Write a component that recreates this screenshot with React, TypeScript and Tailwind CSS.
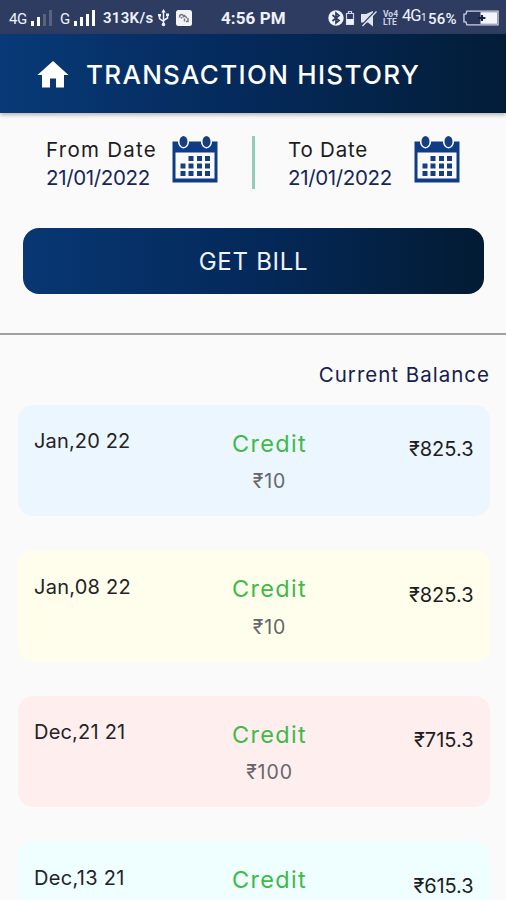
import React from "react";

const transactions = [
  { date: "Jan,20 22", amount: "₹10", balance: "₹825.3", tone: "bg-[#ecf6ff]", dateClass: "tracking-[0.15px]", balanceClass: "tracking-[0px]" },
  { date: "Jan,08 22", amount: "₹10", balance: "₹825.3", tone: "bg-[#fffeec]", dateClass: "tracking-[0.25px]", balanceClass: "tracking-[0px]" },
  { date: "Dec,21 21", amount: "₹100", balance: "₹715.3", tone: "bg-[#ffeeee]", dateClass: "tracking-[0.2px]", balanceClass: "tracking-[0px]" },
  { date: "Dec,13 21", amount: "", balance: "₹615.3", tone: "bg-[#efffff]", dateClass: "tracking-[0.3px]", balanceClass: "tracking-[-0.1px]" },
];

function Signal({ lit }: { lit: number }) {
  return (
    <div className="flex h-4 items-end gap-[3px]">
      <i className={`h-[5px] w-[3px] ${lit > 0 ? "bg-white" : "bg-white/20"}`} />
      <i className={`h-[9px] w-[3px] ${lit > 1 ? "bg-white" : "bg-white/20"}`} />
      <i className={`h-[12px] w-[3px] ${lit > 2 ? "bg-white" : "bg-white/20"}`} />
      <i className={`h-[16px] w-[3px] ${lit > 3 ? "bg-white" : "bg-white/20"}`} />
    </div>
  );
}

function StatusBar() {
  return (
    <div className="flex h-[34px] shrink-0 items-center bg-[#2e3c62] pt-[2px] font-[Roboto,sans-serif] leading-none whitespace-nowrap text-[#eef2fa]">
      <span className="ml-[9px] w-[22px] pt-[3px] text-[15px] tracking-[-0.4px]">4G</span>
      <Signal lit={2} />
      <span className="ml-[8px] w-[14px] pt-[3px] text-[15px]">G</span>
      <Signal lit={4} />
      <span className="ml-[8px] w-[55px] pt-px text-[15px] font-semibold tracking-[0.3px]">313K/s</span>
      <svg className="h-[18px] w-[11px] shrink-0" viewBox="0 0 11 18" fill="none" stroke="currentColor" strokeWidth="1.5">
        <path d="M5.5 2v13M1.5 6v3.5l4 3M9.5 5.500v3.500l-4 2.500" />
        <path d="M5.500 0l2.200 3.500H3.300z" fill="currentColor" stroke="none" />
        <circle cx="5.500" cy="15.500" r="1.800" fill="currentColor" stroke="none" />
        <path d="M0 5h3v2.500H0zM8 4.500h3V7H8z" fill="currentColor" stroke="none" />
      </svg>
      <svg className="ml-[7px] h-[16px] w-[16px] shrink-0" viewBox="0 0 16 16">
        <rect width="16" height="16" rx="2.500" fill="#f2f4f8" />
        <path d="M3.500 7.500q0-3 2-3t2 3M5.500 7v1.500M8 5l3 3M8.500 11.500v-3M12 8v3.500h-2" fill="none" stroke="#737986" strokeWidth="1.500" />
      </svg>
      <span className="ml-[29px] w-[67px] pt-px text-[17px] font-bold tracking-[0.1px]">4:56 PM</span>
      <svg className="ml-[40px] h-[16px] w-[27px] shrink-0" viewBox="0 0 27 16">
        <circle cx="8" cy="8" r="7.700" fill="#eef2fa" />
        <path d="M4.500 5l6.500 5.500L8 13V3l3 2.500L4.500 11" fill="none" stroke="#2e3c62" strokeWidth="1.700" />
        <path d="M18.500 3.500h7v11h-7zM20.500 1.500h3v2h-3z" fill="none" stroke="#cdd4e3" strokeWidth="1.200" />
        <path d="M18.500 9h7v5.500h-7z" fill="#eef2fa" />
      </svg>
      <svg className="ml-[5px] h-[17px] w-[17px] shrink-0" viewBox="0 0 17 17" fill="#dfe4ef">
        <path d="M1 4h5L13 1v15.500L8 12.500H1z" />
        <path d="M16.500 0L1 16.500" stroke="#2e3c62" strokeWidth="2" />
        <path d="M16.500 1.500L2.500 16" stroke="#dfe4ef" strokeWidth="1.300" />
      </svg>
      <span className="ml-[6px] flex w-[19px] flex-col text-[8.500px] leading-none font-bold text-[#cdd4e3]">
        <span>Vo4</span>
        <span>LTE</span>
      </span>
      <span className="-mt-[4px] w-[19px] text-[16.500px] tracking-[-1px]">4G</span>
      <span className="w-[5px] text-[10px]">1</span>
      <span className="ml-[2px] w-[32px] pt-[2px] text-[15px] font-medium tracking-[0.2px]">56%</span>
      <svg className="ml-[2px] h-[16px] w-[37px] shrink-0" viewBox="0 0 38 16">
        <path d="M37 1v14H5l-1-3H2V4h2l1-3z" fill="#28365c" stroke="#cbd1df" strokeWidth="1.400" />
        <path d="M19 2h17v12H19z" fill="#f3f5fa" />
        <path d="M17 8h7M20.500 5v6" stroke="#151e33" strokeWidth="2.200" />
      </svg>
    </div>
  );
}

function CalendarIcon() {
  return (
    <svg className="h-[48px] w-[46px] shrink-0" viewBox="0 0 46 48">
      <path d="M.5 6.500h45v41H.5z" fill="#0e3d85" />
      <path d="M3.500 17.500h39V43.500h-39z" fill="#fafafa" />
      <g fill="#173f80" stroke="#fafafa" strokeWidth="1.600">
        <ellipse cx="11.500" cy="6.500" rx="4.800" ry="6.200" />
        <ellipse cx="34.500" cy="6.500" rx="4.800" ry="6.200" />
      </g>
      <path
        d="M16.500 21h5v5h-5zM25 21h5v5H25zM33 21h5v5h-5zM8.500 28.500h5v5h-5zM16.500 28.500h5v5h-5zM25 28.500h5v5H25zM33 28.500h5v5h-5zM8.500 36h5v5h-5zM16.500 36h5v5h-5zM25 36h5v5H25zM33 36h5v5h-5z"
        fill="#173f80"
      />
    </svg>
  );
}

function DateField({ label, value, labelClass }: { label: string; value: string; labelClass: string }) {
  return (
    <div className="flex w-[172px] items-start justify-between">
      <div className="flex flex-col pt-px text-[20.500px] leading-[27.500px] whitespace-nowrap">
        <span className={`text-[#1c1c1e] ${labelClass}`}>{label}</span>
        <span className="tracking-[-0.35px] text-[#15275a]">{value}</span>
      </div>
      <CalendarIcon />
    </div>
  );
}

export default function App() {
  return (
    <div className="flex h-[900px] w-[506px] flex-col overflow-hidden bg-[#fafafa] font-[Inter,sans-serif]">
      <StatusBar />
      <header className="flex h-[79px] shrink-0 items-center bg-linear-to-r from-[#083a77] via-[#04295a] to-[#031d38] pt-[3px] text-white shadow-[0_2px_4px_rgba(0,0,0,0.28)]">
        <svg className="ml-[37px] h-[28px] w-[32px] shrink-0" viewBox="0 0 32 28" fill="currentColor">
          <path d="M16 0L31.500 14H27V26.500H19V17.500h-6v9H5V14H.5z" />
        </svg>
        <h1 className="ml-[17px] text-[26px] leading-none font-medium tracking-[1.300px] whitespace-nowrap">TRANSACTION HISTORY</h1>
      </header>

      <section className="flex h-[115px] shrink-0 pt-[22px] pl-[46px]">
        <DateField label="From Date" value="21/01/2022" labelClass="tracking-[1.25px]" />
        <div className="mr-[33px] ml-[34px] mt-px h-[53px] w-[3px] bg-[#94ccba]" />
        <DateField label="To Date" value="21/01/2022" labelClass="tracking-[0.8px]" />
      </section>

      <button className="ml-[23px] h-[66px] w-[461px] shrink-0 rounded-[16px] bg-linear-to-r from-[#083773] via-[#04295a] to-[#031b33] pt-[2px] text-[24px] tracking-[0.7px] text-[#f0f3f8]">
        GET BILL
      </button>

      <div className="mt-[38.500px] h-[2px] shrink-0 bg-[#a0a0a0]" />
      <h2 className="mt-[25px] mr-[16px] mb-[15px] self-end text-[20.500px] leading-[30px] tracking-[1px] text-[#15204c]">Current Balance</h2>

      <main className="flex flex-col gap-[34px] px-[18px]">
        {transactions.map((t) => (
          <article key={t.date} className={`flex h-[111.500px] w-[472px] shrink-0 rounded-[15px] pr-[16.500px] pl-[16px] whitespace-nowrap ${t.tone}`}>
            <span className={`w-[160px] pt-[21.500px] text-[20px] leading-[30px] text-[#222427] ${t.dateClass}`}>{t.date}</span>
            <div className="flex w-[151px] flex-col items-center pt-[24px]">
              <span className="text-[23.500px] leading-[30px] tracking-[1.3px] text-[#41b94a]">Credit</span>
              <span className="mt-[7.500px] text-[19.500px] leading-[30px] tracking-[0.9px] text-[#65676b]">{t.amount}</span>
            </div>
            <span className={`flex-1 pt-[29.500px] text-right text-[20px] leading-[30px] text-[#1c1e22] ${t.balanceClass}`}>{t.balance}</span>
          </article>
        ))}
      </main>
    </div>
  );
}
